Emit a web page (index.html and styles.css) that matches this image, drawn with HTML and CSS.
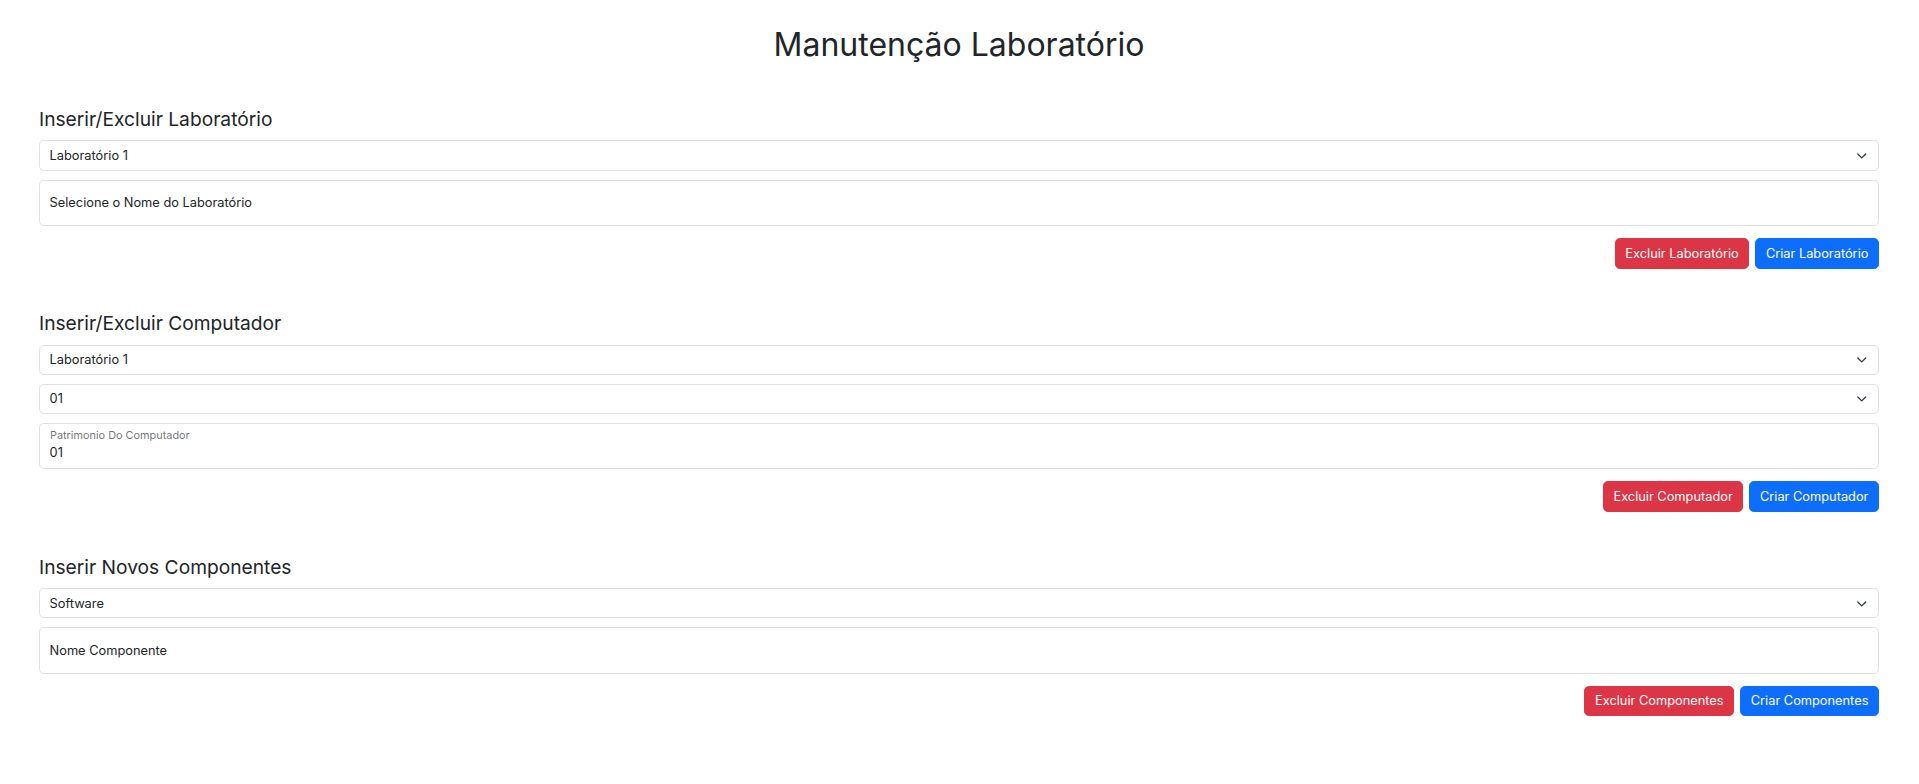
FILE: index.html
```html
<!DOCTYPE html>
<html lang="pt-BR">
<head>
<meta charset="utf-8">
<title>Manutenção Laboratório</title>
<link rel="stylesheet" href="styles.css">
</head>
<body>
<main class="page">
  <h1 class="title">Manutenção Laboratório</h1>

  <section class="block">
    <h4 class="block-title">Inserir/Excluir Laboratório</h4>
    <div class="fields">
      <div class="select"><span>Laboratório 1</span><svg class="chev" viewBox="0 0 16 16" width="11.5" height="11.5"><path d="m2.5 5.5 5.5 5.5 5.5-5.5" fill="none" stroke="#343a40" stroke-width="1.8" stroke-linecap="round" stroke-linejoin="round"/></svg></div>
      <div class="float-field empty"><span class="ph">Selecione o Nome do Laboratório</span></div>
    </div>
    <div class="actions">
      <button class="btn btn-danger">Excluir Laboratório</button>
      <button class="btn btn-primary">Criar Laboratório</button>
    </div>
  </section>

  <section class="block">
    <h4 class="block-title">Inserir/Excluir Computador</h4>
    <div class="fields">
      <div class="select"><span>Laboratório 1</span><svg class="chev" viewBox="0 0 16 16" width="11.5" height="11.5"><path d="m2.5 5.5 5.5 5.5 5.5-5.5" fill="none" stroke="#343a40" stroke-width="1.8" stroke-linecap="round" stroke-linejoin="round"/></svg></div>
      <div class="select"><span>01</span><svg class="chev" viewBox="0 0 16 16" width="11.5" height="11.5"><path d="m2.5 5.5 5.5 5.5 5.5-5.5" fill="none" stroke="#343a40" stroke-width="1.8" stroke-linecap="round" stroke-linejoin="round"/></svg></div>
      <div class="float-field filled"><span class="float-label">Patrimonio Do Computador</span><span class="float-value">01</span></div>
    </div>
    <div class="actions">
      <button class="btn btn-danger">Excluir Computador</button>
      <button class="btn btn-primary">Criar Computador</button>
    </div>
  </section>

  <section class="block">
    <h4 class="block-title">Inserir Novos Componentes</h4>
    <div class="fields">
      <div class="select"><span>Software</span><svg class="chev" viewBox="0 0 16 16" width="11.5" height="11.5"><path d="m2.5 5.5 5.5 5.5 5.5-5.5" fill="none" stroke="#343a40" stroke-width="1.8" stroke-linecap="round" stroke-linejoin="round"/></svg></div>
      <div class="float-field empty"><span class="ph">Nome Componente</span></div>
    </div>
    <div class="actions">
      <button class="btn btn-danger">Excluir Componentes</button>
      <button class="btn btn-primary">Criar Componentes</button>
    </div>
  </section>
</main>
</body>
</html>
```
FILE: styles.css
```css
* { box-sizing: border-box; }
html, body { margin: 0; padding: 0; background: #fff; }
body {
  font-family: Inter, "Noto Sans", "Liberation Sans", sans-serif;
  color: #212529;
  font-size: 12.8px;
  line-height: 1.5;
}
.page {
  padding: 26px 40px 40px 39px;
}
.title {
  margin: 0;
  font-size: 32px;
  font-weight: 400;
  line-height: 1.2;
  text-align: center;
}
.block { margin-top: 43.8px; }
.block-title {
  margin: 0 0 9.1px;
  font-size: 19.2px;
  font-weight: 400;
  line-height: 1.2;
}
.fields {
  display: flex;
  flex-direction: column;
  gap: 8.8px;
}
.select {
  height: 30.4px;
  display: flex;
  align-items: center;
  justify-content: space-between;
  padding: 0 10.5px 0 9.6px;
  border: 0.8px solid #dee2e6;
  border-radius: 4.8px;
  background: #fff;
}
.chev { display: block; }
.float-field {
  height: 46.4px;
  border: 0.8px solid #dee2e6;
  border-radius: 4.8px;
  padding: 0 9.6px;
  display: flex;
  flex-direction: column;
}
.float-field.empty { justify-content: center; }
.ph { line-height: 19.2px; }
.float-label {
  margin-top: 3.4px;
  margin-left: 0.4px;
  font-size: 10.88px;
  line-height: 16.32px;
  color: rgba(33, 37, 41, 0.65);
}
.float-value { line-height: 19.2px; margin-top: -1px; }
.actions {
  margin-top: 12px;
  display: flex;
  justify-content: flex-end;
  gap: 6px;
}
.btn {
  font-family: inherit;
  font-size: 12.8px;
  line-height: 19.2px;
  padding: 4.8px 9.6px;
  border: 0.8px solid transparent;
  border-radius: 4.8px;
  color: #fff;
  cursor: pointer;
}
.btn-danger { background: #dc3545; border-color: #dc3545; }
.btn-primary { background: #0d6efd; border-color: #0d6efd; }
```
